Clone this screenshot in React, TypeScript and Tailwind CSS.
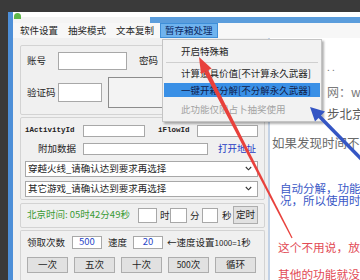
import React from "react";

function Input({ className = "", children }: { className?: string; children?: React.ReactNode }) {
  return (
    <div className={"shrink-0 bg-white border border-[#a8a8a8] flex items-center justify-center " + className}>
      {children}
    </div>
  );
}

function Select({ text }: { text: string }) {
  return (
    <div className="ml-[4px] w-[233px] h-[16px] bg-white border border-[#a8a8a8] flex items-center justify-between pl-[2px] pr-[5px]">
      <span className="leading-none">{text}</span>
      <svg width="7" height="5" viewBox="0 0 7 5">
        <path d="M0.8 1 L3.5 3.8 L6.2 1" stroke="#333" strokeWidth="1.1" fill="none" />
      </svg>
    </div>
  );
}

function Btn({ children, className = "" }: { children: React.ReactNode; className?: string }) {
  return (
    <div className={"shrink-0 bg-[#e1e1e1] border border-[#adadad] flex items-center justify-center leading-none " + className}>
      {children}
    </div>
  );
}

export default function App() {
  return (
    <div className="relative w-[360px] h-[280px] overflow-hidden bg-[#3a3a3a] font-['Noto_Sans_CJK_SC',sans-serif] text-[9.5px] text-[#262626]">
      <div className="h-[12px]" />
      <div className="flex h-[268px]">
        <div className="w-[8px] shrink-0" />
        <div className="flex-1 min-w-0 flex flex-col border-l-[5px] border-[#4d8fd8] bg-[#f0f0f0]">
          {/* title bar */}
          <div className="relative h-[11px] bg-[linear-gradient(to_bottom,#ffffff_0%,#ffffff_45%,#f4f4f4_45%,#f4f4f4_100%)]">
            <div className="absolute left-[137px] right-0 top-[5px] bottom-0 bg-[#5b9ddc]" />
            <div className="absolute left-[1px] top-[1px] w-[7px] h-[6px] rounded-t-full bg-[#5fb84a]" />
          </div>
          {/* menu bar */}
          <div className="h-[15px] bg-[#f7f7f7] flex items-stretch pl-[2px]">
            <div className="px-[5px] flex items-center">软件设置</div>
            <div className="px-[5px] flex items-center">抽奖模式</div>
            <div className="px-[5px] flex items-center">文本复制</div>
            <div className="px-[4px] ml-[1px] flex items-center bg-[#6fb3ee] border border-[#3f8fd8] text-[#0d2a66]">暂存箱处理</div>
          </div>
          {/* content */}
          <div className="flex-1 flex min-w-0">
            {/* left panel */}
            <div className="w-[255px] shrink-0 pl-[7px] pr-[3px] flex flex-col">
              {/* group 1 */}
              <div className="mt-[7px] h-[70px] border border-[#d3d3d3] rounded-[2px] pt-[6px] pl-[6px] flex flex-col">
                <div className="flex items-center h-[18px]">
                  <span className="w-[31px] shrink-0">账号</span>
                  <Input className="w-[69px] h-[18px]" />
                  <span className="ml-[12px] w-[26px] shrink-0">密码</span>
                  <Input className="w-[70px] h-[18px]" />
                </div>
                <div className="flex items-center mt-[7px] h-[31px]">
                  <span className="w-[31px] shrink-0">验证码</span>
                  <Input className="w-[44px] h-[19px]" />
                  <div className="ml-[6px] w-[95px] h-[31px] border border-[#8c8c8c] bg-[#f3f3f3]" />
                </div>
              </div>
              {/* group 2 */}
              <div className="mt-[2px] h-[83px] border border-[#d3d3d3] rounded-[2px] pt-[7px] flex flex-col">
                <div className="flex items-center h-[12px]">
                  <span className="ml-[4px] w-[58px] shrink-0 font-['Liberation_Mono',monospace] text-[7.5px] font-bold text-[#222]">iActivityId</span>
                  <Input className="w-[62px] h-[12px]" />
                  <span className="ml-[13px] w-[39px] shrink-0 font-['Liberation_Mono',monospace] text-[7.5px] font-bold text-[#222]">iFlowId</span>
                  <Input className="w-[61px] h-[12px]" />
                </div>
                <div className="flex items-center h-[12px] mt-[6px]">
                  <span className="ml-[4px] w-[58px] shrink-0 text-right pr-[7px]">附加数据</span>
                  <Input className="w-[125px] h-[12px]" />
                  <span className="ml-[10px] whitespace-nowrap text-[#1f3bc4]">打开地址</span>
                </div>
                <div className="mt-[6px]">
                  <Select text="穿越火线_请确认达到要求再选择" />
                </div>
                <div className="mt-[4px]">
                  <Select text="其它游戏_请确认达到要求再选择" />
                </div>
              </div>
              {/* group 3 */}
              <div className="mt-[3px] h-[25px] border border-[#d3d3d3] rounded-[2px] flex items-center pl-[6px]">
                <span className="w-[111px] shrink-0 whitespace-nowrap text-[#3b9b36] leading-none">北京时间: 05时42分49秒</span>
                <Input className="w-[19px] h-[15px]" />
                <span className="ml-[3px] w-[10px] shrink-0">时</span>
                <Input className="w-[17px] h-[15px]" />
                <span className="ml-[3px] w-[12px] shrink-0">分</span>
                <Input className="w-[16px] h-[15px]" />
                <span className="ml-[4px] w-[11px] shrink-0">秒</span>
                <Btn className="w-[25px] h-[18px]">定时</Btn>
              </div>
              {/* group 4 */}
              <div className="mt-[2px] flex-1 border border-[#d3d3d3] border-b-0 rounded-t-[2px] pt-[5px] pl-[6px] flex flex-col">
                <div className="flex items-center h-[13px]">
                  <span className="w-[45px] shrink-0">领取次数</span>
                  <Input className="w-[30px] h-[13px] text-[#2846c8] leading-none">500</Input>
                  <span className="ml-[6px] w-[25px] shrink-0">速度</span>
                  <Input className="w-[30px] h-[13px] text-[#2846c8] leading-none">20</Input>
                  <span className="ml-[4px] whitespace-nowrap">←速度设置<span className="text-[8px]">1000=1</span>秒</span>
                </div>
                <div className="flex gap-[6px] mt-[8px]">
                  <Btn className="w-[41px] h-[16px]">一次</Btn>
                  <Btn className="w-[41px] h-[16px]">五次</Btn>
                  <Btn className="w-[41px] h-[16px]">十次</Btn>
                  <Btn className="w-[41px] h-[16px]"><span className="text-[8.5px]">500</span>次</Btn>
                  <Btn className="w-[41px] h-[16px]">循环</Btn>
                </div>
              </div>
            </div>
            {/* right panel */}
            <div className="flex-1 min-w-0 bg-white border-l-[2px] border-[#c3d2e6] flex flex-col whitespace-nowrap overflow-hidden">
              <div className="mt-[24px] ml-[57px] text-[10px] text-[#777] leading-none">. .</div>
              <div className="mt-[14px] ml-[57px] text-[12px] text-[#7a7a7a] leading-none">网：www</div>
              <div className="mt-[10px] ml-[57px] text-[12.5px] text-[#5a5a5a] leading-none">步北京</div>
              <div className="mt-[17px] ml-[2px] text-[12.5px] text-[#6a6a6a] leading-none">如果发现时间不</div>
              <div className="mt-[32px] ml-[10px] h-[12px] text-[11.5px] text-[#3a58c6] leading-[12px]">自动分解，功能</div>
              <div className="ml-[10px] h-[12px] text-[11.5px] text-[#3a58c6] leading-[12px]">况，所以使用时</div>
              <div className="mt-[35px] ml-[8px] text-[11.7px] text-[#e24a55] leading-none">这个不用说，放</div>
              <div className="mt-[16px] ml-[8px] text-[11.7px] text-[#e24a55] leading-none">其他的功能就没</div>
            </div>
          </div>
        </div>
      </div>

      {/* dropdown menu */}
      <div className="absolute left-[162px] top-[39px] w-[160px] h-[83px] bg-[#f2f2f2] border border-[#c4c4c4] shadow-[2px_2px_2px_rgba(0,0,0,0.3)] flex flex-col pt-[3px] px-[1px]">
        <div className="h-[16px] flex items-center pl-[17px]">开启特殊箱</div>
        <div className="h-[7px] flex items-center px-[2px]">
          <div className="w-full h-px bg-[#cfcfcf]" />
        </div>
        <div className="h-[16px] flex items-center pl-[17px]">计算道具价值[不计算永久武器]</div>
        <div className="mt-[1px] h-[15px] flex items-center pl-[17px] bg-[#3a90e6] text-[#10204a]">一键开箱分解[不分解永久武器]</div>
        <div className="h-[24px] flex items-center pl-[17px] text-[#a3a3a3]">此功能仅限占卜抽奖使用</div>
      </div>

      {/* arrows */}
      <svg className="absolute left-0 top-0 pointer-events-none" width="360" height="280" viewBox="0 0 360 280">
        <polygon points="199,57 211.6,68.5 201,73.9" fill="#e8413c" />
        <polygon points="208.2,70.3 204.2,72.3 291.5,238.3 292.6,237.7" fill="#e8413c" />
        <polygon points="310,107 325,111.5 315,121.5" fill="#3556c4" />
        <line x1="319" y1="116" x2="372" y2="170" stroke="#3556c4" strokeWidth="3.5" />
      </svg>
    </div>
  );
}
